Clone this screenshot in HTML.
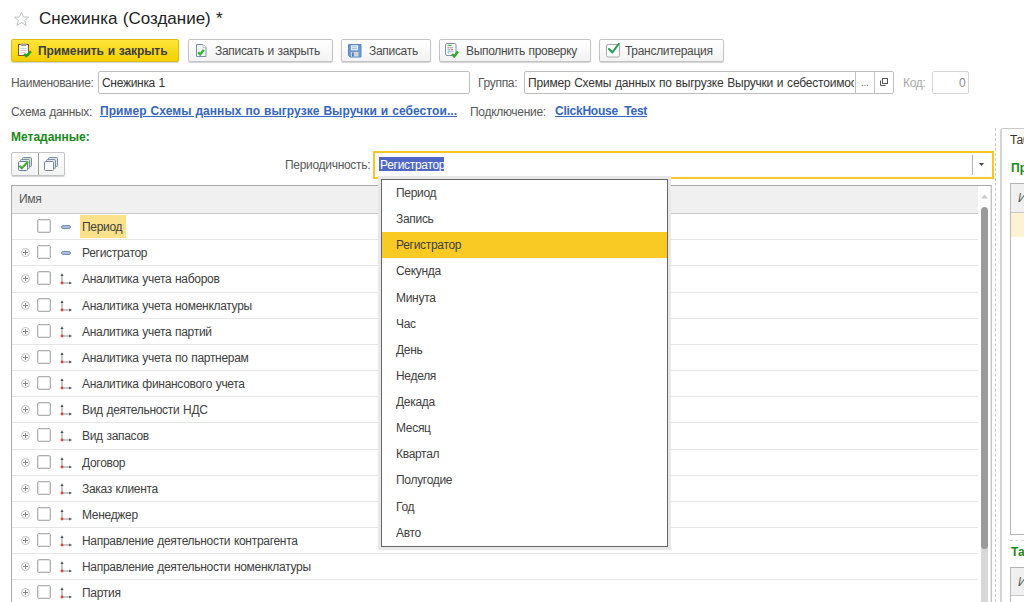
<!DOCTYPE html>
<html><head><meta charset="utf-8">
<style>
*{box-sizing:border-box;margin:0;padding:0}
html,body{width:1024px;height:602px;overflow:hidden;background:#fff}
body{position:relative;font-family:"Liberation Sans",sans-serif;font-size:12px;letter-spacing:-0.3px;word-spacing:0.6px;color:#333}
.a{position:absolute;white-space:nowrap}
.t{position:absolute;white-space:nowrap;line-height:14px;height:14px}
.btn{position:absolute;top:39px;height:23px;border:1px solid #c4c4c4;border-radius:2px;background:linear-gradient(#fff,#f3f3f3);box-shadow:0 1px 1px rgba(0,0,0,.18)}
.btn .t{top:4px;color:#4a4a4a}
.ybtn{background:linear-gradient(#ffe53c,#f5d000);border-color:#dcbc12}
.lbl{color:#585858}
.inp{position:absolute;border:1px solid #bdbdbd;border-radius:2px;background:#fff}
.link{color:#3466c2;font-weight:bold;font-size:12px;letter-spacing:0.05px;text-decoration:underline}
.green{color:#188818;font-weight:bold;font-size:12px;letter-spacing:0}
.row{position:absolute;left:12px;width:966px;height:1px;background:#e6e6e6}
.cb{position:absolute;left:37px;width:14px;height:14px;border:1px solid #b0b0b0;border-radius:2px;background:#fff;box-shadow:inset 0 0 0 .5px #d0d0d0}
.exp{position:absolute;left:21px;width:9px;height:9px;border:1px solid #c0c0c0;border-radius:50%}
.exp:before{content:"";position:absolute;left:1px;top:3px;width:5px;height:1px;background:#888}
.exp:after{content:"";position:absolute;left:3px;top:1px;width:1px;height:5px;background:#888}
.pill{position:absolute;left:61px;width:10px;height:4px;border-radius:2px;background:#a8bfd8;border:1px solid #7393b6}
.ax{position:absolute;left:61px;width:12px;height:12px;overflow:visible}
.rt{position:absolute;left:82px;line-height:14px;height:14px;color:#404040}
.dd{position:absolute;left:396px;line-height:14px;height:14px;color:#404040}
</style></head><body>

<!-- title -->
<svg class="a" style="left:13px;top:10.5px" width="17" height="16" viewBox="0 0 17 16"><path d="M8.5 1.2 L10.5 6 L15.7 6.1 L11.6 9.4 L13.1 14.5 L8.5 11.5 L3.9 14.5 L5.4 9.4 L1.3 6.1 L6.5 6 Z" fill="none" stroke="#bcc2c8" stroke-width="1"/></svg>
<div class="a" style="left:39px;top:9px;font-size:17px;letter-spacing:0;line-height:20px;color:#222">Снежинка (Создание) *</div>

<!-- toolbar -->
<div class="btn ybtn" style="left:11px;width:168px">
  <svg class="a" style="left:6px;top:3px" width="16" height="16" viewBox="0 0 16 16" style="overflow:visible"><rect x="0.5" y="1.5" width="10" height="11" fill="#fff" stroke="#9c4a1c"/><rect x="2.5" y="0.5" width="6" height="2.5" rx="1" fill="#a0a0a0"/><path d="M2.5 5.5h6M2.5 7.5h6M2.5 9.5h4" stroke="#d2d2d2"/><path d="M6.2 10.8 L8.3 13 L13 8.3" fill="none" stroke="#1fa51f" stroke-width="2.4"/></svg>
  <div class="t" style="left:26px;top:3.5px;font-weight:bold;font-size:12px;letter-spacing:-0.1px;color:#3d3d3d">Применить и закрыть</div>
</div>
<div class="btn" style="left:188px;width:145px">
  <svg class="a" style="left:6px;top:3px" width="13" height="16" viewBox="0 0 13 16"><path d="M1.5 1.5h6.5l3 3v9h-9.5z" fill="#f7f7f7" stroke="#7d8fa3"/><path d="M8 1.5v3h3" fill="#fff" stroke="#b5c2cf"/><path d="M3.2 9.3 L5.2 11.5 L8.8 6.8" fill="none" stroke="#36b536" stroke-width="2.4"/></svg>
  <div class="t" style="left:26px">Записать и закрыть</div>
</div>
<div class="btn" style="left:341px;width:90px">
  <svg class="a" style="left:6px;top:4px" width="14" height="14" viewBox="0 0 14 14"><path d="M0.5 0.5h12.5v12.5H2L0.5 11.5z" fill="#6b9ad6" stroke="#5a86c0"/><rect x="3" y="1.2" width="7" height="5" fill="#eef3fa"/><path d="M4 2.8h5M4 4.6h5" stroke="#86a9da" stroke-width=".8"/><rect x="3" y="8" width="7.5" height="4.5" fill="#cfd8d0"/><rect x="4" y="8.5" width="1.8" height="4" fill="#4f7fc0"/></svg>
  <div class="t" style="left:27px">Записать</div>
</div>
<div class="btn" style="left:439px;width:152px">
  <svg class="a" style="left:4px;top:2px" width="15" height="16" viewBox="0 0 15 16"><rect x="1.5" y="1.5" width="10.5" height="12" rx="1.5" fill="#fff" stroke="#7d8fa3"/><path d="M3.5 3.5h4" stroke="#3cb83c" stroke-width="1"/><path d="M3.5 5.8h2" stroke="#e05050"/><path d="M6 5.8h3" stroke="#6d9fd8"/><path d="M3.5 7.8h2.5" stroke="#6d9fd8"/><path d="M6.5 7.8h2.5" stroke="#e05050"/><path d="M3.5 9.5h6" stroke="#a9c5e8"/><path d="M3.5 11h1.5" stroke="#6d9fd8"/><path d="M8 12 L10.3 14.5 L14 9.5" fill="none" stroke="#2ea52e" stroke-width="2.3"/></svg>
  <div class="t" style="left:26px">Выполнить проверку</div>
</div>
<div class="btn" style="left:599px;width:125px">
  <svg class="a" style="left:6px;top:2px" width="16" height="17" viewBox="0 0 16 17"><rect x="0.5" y="2.5" width="13" height="12.5" rx="1.5" fill="#fff" stroke="#a8a8a8"/><path d="M3 7 L6.3 10.5 L12.8 1.8" fill="none" stroke="#1ea04a" stroke-width="2" stroke-linecap="round" stroke-linejoin="round"/></svg>
  <div class="t" style="left:25px">Транслитерация</div>
</div>

<!-- row 2 -->
<div class="t lbl" style="left:11px;top:76px">Наименование:</div>
<div class="inp" style="left:98px;top:71px;width:372px;height:23px"></div>
<div class="t" style="left:102px;top:76px">Снежинка 1</div>
<div class="t lbl" style="left:478px;top:76px">Группа:</div>
<div class="inp" style="left:524px;top:71px;width:370px;height:23px;overflow:hidden">
  <div class="t" style="left:3px;top:4px;width:326px;overflow:hidden;letter-spacing:-0.2px">Пример Схемы данных по выгрузке Выручки и себестоимость</div>
  <div class="a" style="left:330px;top:0;width:1px;height:21px;background:#c0c0c0"></div>
  <div class="t" style="left:336px;top:4px;color:#666;font-size:10px">...</div>
  <div class="a" style="left:349px;top:0;width:1px;height:21px;background:#c0c0c0"></div>
  <svg class="a" style="left:353.5px;top:5px" width="10" height="10" viewBox="0 0 10 10"><rect x="3.5" y="1.5" width="5" height="5" fill="none" stroke="#555"/><path d="M1.5 3.5v5h5" fill="none" stroke="#555"/></svg>
</div>
<div class="t" style="left:903px;top:76px;color:#a8a8a8">Код:</div>
<div class="inp" style="left:932px;top:71px;width:37px;height:23px;border-color:#d6d6d6"></div>
<div class="t" style="left:959px;top:76px;color:#888">0</div>

<!-- row 3 -->
<div class="t lbl" style="left:11px;top:104.6px">Схема данных:</div>
<div class="t link" style="left:100px;top:104px">Пример Схемы данных по выгрузке Выручки и себестои...</div>
<div class="t lbl" style="left:470px;top:104.6px">Подключение:</div>
<div class="t link" style="left:555px;top:104px;letter-spacing:-0.25px">ClickHouse_Test</div>

<!-- metadata -->
<div class="t green" style="left:11px;top:130px">Метаданные:</div>
<div class="btn" style="left:11px;top:152px;width:54px;height:24px">
  <div class="a" style="left:26px;top:0;width:1px;height:22px;background:#9a9a9a"></div>
  <svg class="a" style="left:5px;top:4px" width="15" height="15" viewBox="0 0 15 15"><rect x="5.5" y="0.5" width="9" height="9" rx="1" fill="#cfe3c8" stroke="#7a8ea3"/><rect x="3.5" y="2.5" width="9" height="9" rx="1" fill="#dfe6ee" stroke="#7a8ea3"/><rect x="1.5" y="4.5" width="9" height="9" rx="1" fill="#fff" stroke="#6f8499"/><path d="M2.3 8.8 L4.8 11.2 L11 4.5" fill="none" stroke="#45b02e" stroke-width="2.2"/></svg>
  <svg class="a" style="left:31px;top:4px" width="15" height="15" viewBox="0 0 15 15"><rect x="5.5" y="0.5" width="9" height="9" rx="1" fill="#dfe6ee" stroke="#7a8ea3"/><rect x="3.5" y="2.5" width="9" height="9" rx="1" fill="#dfe6ee" stroke="#7a8ea3"/><rect x="1.5" y="4.5" width="9" height="9" rx="1" fill="#fff" stroke="#6f8499"/></svg>
</div>
<div class="t lbl" style="left:285px;top:158px">Периодичность:</div>

<!-- table -->
<div class="a" style="left:11px;top:185px;width:981px;height:417px;border:1px solid #a8a8a8;border-right-color:#c4c4c4;border-bottom:none"></div>
<div class="a" style="left:990px;top:186px;width:1px;height:416px;background:#e4e4e4"></div>
<div class="a" style="left:12px;top:186px;width:966px;height:27px;background:#f0f0f0"></div>
<div class="a" style="left:12px;top:213px;width:966px;height:1px;background:#c9c9c9"></div>
<div class="t lbl" style="left:19px;top:192px">Имя</div>

<div class="a" style="left:80px;top:215px;width:46px;height:23px;background:#fbe18a"></div>
<div class="cb" style="top:219px"></div>
<div class="pill" style="top:225px"></div>
<div class="rt" style="top:220px">Период</div>
<div class="row" style="top:239px"></div>
<div class="exp" style="top:248px"></div>
<div class="cb" style="top:245px"></div>
<div class="pill" style="top:251px"></div>
<div class="rt" style="top:246px">Регистратор</div>
<div class="row" style="top:265px"></div>
<div class="exp" style="top:274px"></div>
<div class="cb" style="top:271px"></div>
<svg class="ax" style="top:273px" width="12" height="12" viewBox="0 0 12 12"><path d="M1 2.5V10H9" fill="none" stroke="#8f8f8f" stroke-width="1"/><path d="M1 0.2L-0.6 3H2.6Z" fill="#3f5366"/><path d="M11 10L8.2 8.4V11.6Z" fill="#3f5366"/><circle cx="1" cy="10" r="1.4" fill="#e8402a"/></svg>
<div class="rt" style="top:272px">Аналитика учета наборов</div>
<div class="row" style="top:292px"></div>
<div class="exp" style="top:301px"></div>
<div class="cb" style="top:298px"></div>
<svg class="ax" style="top:300px" width="12" height="12" viewBox="0 0 12 12"><path d="M1 2.5V10H9" fill="none" stroke="#8f8f8f" stroke-width="1"/><path d="M1 0.2L-0.6 3H2.6Z" fill="#3f5366"/><path d="M11 10L8.2 8.4V11.6Z" fill="#3f5366"/><circle cx="1" cy="10" r="1.4" fill="#e8402a"/></svg>
<div class="rt" style="top:299px">Аналитика учета номенклатуры</div>
<div class="row" style="top:318px"></div>
<div class="exp" style="top:327px"></div>
<div class="cb" style="top:324px"></div>
<svg class="ax" style="top:326px" width="12" height="12" viewBox="0 0 12 12"><path d="M1 2.5V10H9" fill="none" stroke="#8f8f8f" stroke-width="1"/><path d="M1 0.2L-0.6 3H2.6Z" fill="#3f5366"/><path d="M11 10L8.2 8.4V11.6Z" fill="#3f5366"/><circle cx="1" cy="10" r="1.4" fill="#e8402a"/></svg>
<div class="rt" style="top:325px">Аналитика учета партий</div>
<div class="row" style="top:344px"></div>
<div class="exp" style="top:353px"></div>
<div class="cb" style="top:350px"></div>
<svg class="ax" style="top:352px" width="12" height="12" viewBox="0 0 12 12"><path d="M1 2.5V10H9" fill="none" stroke="#8f8f8f" stroke-width="1"/><path d="M1 0.2L-0.6 3H2.6Z" fill="#3f5366"/><path d="M11 10L8.2 8.4V11.6Z" fill="#3f5366"/><circle cx="1" cy="10" r="1.4" fill="#e8402a"/></svg>
<div class="rt" style="top:351px">Аналитика учета по партнерам</div>
<div class="row" style="top:370px"></div>
<div class="exp" style="top:379px"></div>
<div class="cb" style="top:376px"></div>
<svg class="ax" style="top:378px" width="12" height="12" viewBox="0 0 12 12"><path d="M1 2.5V10H9" fill="none" stroke="#8f8f8f" stroke-width="1"/><path d="M1 0.2L-0.6 3H2.6Z" fill="#3f5366"/><path d="M11 10L8.2 8.4V11.6Z" fill="#3f5366"/><circle cx="1" cy="10" r="1.4" fill="#e8402a"/></svg>
<div class="rt" style="top:377px">Аналитика финансового учета</div>
<div class="row" style="top:396px"></div>
<div class="exp" style="top:405px"></div>
<div class="cb" style="top:402px"></div>
<svg class="ax" style="top:404px" width="12" height="12" viewBox="0 0 12 12"><path d="M1 2.5V10H9" fill="none" stroke="#8f8f8f" stroke-width="1"/><path d="M1 0.2L-0.6 3H2.6Z" fill="#3f5366"/><path d="M11 10L8.2 8.4V11.6Z" fill="#3f5366"/><circle cx="1" cy="10" r="1.4" fill="#e8402a"/></svg>
<div class="rt" style="top:403px">Вид деятельности НДС</div>
<div class="row" style="top:422px"></div>
<div class="exp" style="top:431px"></div>
<div class="cb" style="top:428px"></div>
<svg class="ax" style="top:430px" width="12" height="12" viewBox="0 0 12 12"><path d="M1 2.5V10H9" fill="none" stroke="#8f8f8f" stroke-width="1"/><path d="M1 0.2L-0.6 3H2.6Z" fill="#3f5366"/><path d="M11 10L8.2 8.4V11.6Z" fill="#3f5366"/><circle cx="1" cy="10" r="1.4" fill="#e8402a"/></svg>
<div class="rt" style="top:429px">Вид запасов</div>
<div class="row" style="top:449px"></div>
<div class="exp" style="top:458px"></div>
<div class="cb" style="top:455px"></div>
<svg class="ax" style="top:457px" width="12" height="12" viewBox="0 0 12 12"><path d="M1 2.5V10H9" fill="none" stroke="#8f8f8f" stroke-width="1"/><path d="M1 0.2L-0.6 3H2.6Z" fill="#3f5366"/><path d="M11 10L8.2 8.4V11.6Z" fill="#3f5366"/><circle cx="1" cy="10" r="1.4" fill="#e8402a"/></svg>
<div class="rt" style="top:456px">Договор</div>
<div class="row" style="top:475px"></div>
<div class="exp" style="top:484px"></div>
<div class="cb" style="top:481px"></div>
<svg class="ax" style="top:483px" width="12" height="12" viewBox="0 0 12 12"><path d="M1 2.5V10H9" fill="none" stroke="#8f8f8f" stroke-width="1"/><path d="M1 0.2L-0.6 3H2.6Z" fill="#3f5366"/><path d="M11 10L8.2 8.4V11.6Z" fill="#3f5366"/><circle cx="1" cy="10" r="1.4" fill="#e8402a"/></svg>
<div class="rt" style="top:482px">Заказ клиента</div>
<div class="row" style="top:501px"></div>
<div class="exp" style="top:510px"></div>
<div class="cb" style="top:507px"></div>
<svg class="ax" style="top:509px" width="12" height="12" viewBox="0 0 12 12"><path d="M1 2.5V10H9" fill="none" stroke="#8f8f8f" stroke-width="1"/><path d="M1 0.2L-0.6 3H2.6Z" fill="#3f5366"/><path d="M11 10L8.2 8.4V11.6Z" fill="#3f5366"/><circle cx="1" cy="10" r="1.4" fill="#e8402a"/></svg>
<div class="rt" style="top:508px">Менеджер</div>
<div class="row" style="top:527px"></div>
<div class="exp" style="top:536px"></div>
<div class="cb" style="top:533px"></div>
<svg class="ax" style="top:535px" width="12" height="12" viewBox="0 0 12 12"><path d="M1 2.5V10H9" fill="none" stroke="#8f8f8f" stroke-width="1"/><path d="M1 0.2L-0.6 3H2.6Z" fill="#3f5366"/><path d="M11 10L8.2 8.4V11.6Z" fill="#3f5366"/><circle cx="1" cy="10" r="1.4" fill="#e8402a"/></svg>
<div class="rt" style="top:534px">Направление деятельности контрагента</div>
<div class="row" style="top:553px"></div>
<div class="exp" style="top:562px"></div>
<div class="cb" style="top:559px"></div>
<svg class="ax" style="top:561px" width="12" height="12" viewBox="0 0 12 12"><path d="M1 2.5V10H9" fill="none" stroke="#8f8f8f" stroke-width="1"/><path d="M1 0.2L-0.6 3H2.6Z" fill="#3f5366"/><path d="M11 10L8.2 8.4V11.6Z" fill="#3f5366"/><circle cx="1" cy="10" r="1.4" fill="#e8402a"/></svg>
<div class="rt" style="top:560px">Направление деятельности номенклатуры</div>
<div class="row" style="top:579px"></div>
<div class="exp" style="top:588px"></div>
<div class="cb" style="top:585px"></div>
<svg class="ax" style="top:587px" width="12" height="12" viewBox="0 0 12 12"><path d="M1 2.5V10H9" fill="none" stroke="#8f8f8f" stroke-width="1"/><path d="M1 0.2L-0.6 3H2.6Z" fill="#3f5366"/><path d="M11 10L8.2 8.4V11.6Z" fill="#3f5366"/><circle cx="1" cy="10" r="1.4" fill="#e8402a"/></svg>
<div class="rt" style="top:586px">Партия</div>

<!-- scrollbar -->
<div class="a" style="left:981px;top:215px;width:7px;height:387px;background:#d8d8d8"></div>
<div class="a" style="left:981px;top:207px;width:7px;height:342px;background:#9b9b9b;border-radius:3.5px"></div>
<svg class="a" style="left:981px;top:194px" width="7" height="5"><path d="M0 4.5 L3.5 0.5 L7 4.5Z" fill="#c9c9c9"/></svg>

<!-- periodicity input -->
<div class="a" style="left:373px;top:151px;width:621px;height:28px;border:2px solid #f6c623;background:#fff"></div>
<div class="a" style="left:379px;top:157px;width:65px;height:14px;background:#5067c3"></div>
<div class="t" style="left:380px;top:157.6px;color:#fff">Регистратор</div>
<div class="a" style="left:972px;top:155px;width:1px;height:20px;background:#b5b5b5"></div>
<svg class="a" style="left:978.5px;top:162.5px" width="5" height="3"><path d="M0 0H5L2.5 3Z" fill="#444"/></svg>

<!-- right panel -->
<div class="a" style="left:995px;top:128px;width:0;height:474px;border-left:1px dashed #cbcbcb"></div>
<div class="a" style="left:1000px;top:128px;width:40px;height:490px;border:1px solid #c8c8c8;border-left:2px solid #d4d4d4;border-radius:3px 0 0 0"></div>
<div class="t" style="left:1010px;top:133px;color:#333">Таб</div>
<div class="t green" style="left:1011px;top:161px">Пр</div>
<div class="a" style="left:1010px;top:183px;width:30px;height:352px;border:1px solid #b4b4b4;border-left-color:#b8b8b8"></div>
<div class="a" style="left:1011px;top:184px;width:30px;height:29px;background:#f0f0f0;border-bottom:1px solid #c9c9c9"></div>
<div class="t" style="left:1018px;top:191px;font-style:italic;color:#555">Имя</div>
<div class="a" style="left:1011px;top:213px;width:30px;height:24px;background:#fdf3d3"></div>
<div class="a" style="left:1010px;top:540px;width:30px;height:0;border-top:1px dashed #d4d4d4"></div>
<div class="t green" style="left:1011px;top:545px">Таб</div>
<div class="a" style="left:1010px;top:567px;width:30px;height:40px;border:1px solid #b4b4b4;border-left-color:#b8b8b8"></div>
<div class="a" style="left:1011px;top:568px;width:30px;height:28px;background:#f0f0f0;border-bottom:1px solid #c9c9c9"></div>
<div class="t" style="left:1018px;top:575px;font-style:italic;color:#555">Имя</div>

<!-- dropdown -->
<div class="a" style="left:381px;top:179px;width:287px;height:368px;border:1px solid #666;background:#fff;box-shadow:0 0 0 3px #e8e8e8"></div>
<div class="a" style="left:382px;top:232px;width:285px;height:26px;background:#f9ca24"></div>
<div class="dd" style="top:186px">Период</div>
<div class="dd" style="top:212px">Запись</div>
<div class="dd" style="top:238px">Регистратор</div>
<div class="dd" style="top:264px">Секунда</div>
<div class="dd" style="top:291px">Минута</div>
<div class="dd" style="top:317px">Час</div>
<div class="dd" style="top:343px">День</div>
<div class="dd" style="top:369px">Неделя</div>
<div class="dd" style="top:395px">Декада</div>
<div class="dd" style="top:421px">Месяц</div>
<div class="dd" style="top:447px">Квартал</div>
<div class="dd" style="top:473px">Полугодие</div>
<div class="dd" style="top:500px">Год</div>
<div class="dd" style="top:526px">Авто</div>

</body></html>
